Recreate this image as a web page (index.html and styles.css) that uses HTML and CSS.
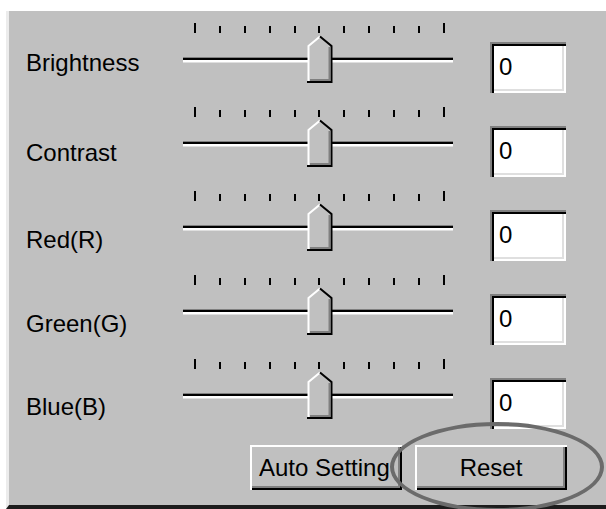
FILE: index.html
```html
<!DOCTYPE html>
<html lang="en">
<head>
  <meta charset="UTF-8">
  <title>Color Adjustment</title>
  <link rel="stylesheet" href="styles.css">
</head>
<body>

<div class="frame">
  <div class="panel">

    <div class="row">
      <span class="label">Brightness</span>
      <div class="slider">
        <div class="ticks"><i class="big"></i><i></i><i></i><i></i><i></i><i></i><i></i><i></i><i></i><i></i><i class="big"></i></div>
        <div class="track"></div>
        <svg class="thumb" width="26" height="48" viewBox="0 0 26 48">
          <polygon points="1,11 13,1 25,11 25,47 1,47" fill="#c0c0c0"/>
          <polyline points="1.5,46 1.5,11 13,1.5" fill="none" stroke="#fff" stroke-width="2"/>
          <polyline points="13,1.5 24.5,11 24.5,47 0,47" fill="none" stroke="#000" stroke-width="2"/>
          <polyline points="22.5,12 22.5,45 3,45" fill="none" stroke="#808080" stroke-width="2"/>
        </svg>
      </div>
      <div class="field">0</div>
    </div>

    <div class="row">
      <span class="label">Contrast</span>
      <div class="slider">
        <div class="ticks"><i class="big"></i><i></i><i></i><i></i><i></i><i></i><i></i><i></i><i></i><i></i><i class="big"></i></div>
        <div class="track"></div>
        <svg class="thumb" width="26" height="48" viewBox="0 0 26 48">
          <polygon points="1,11 13,1 25,11 25,47 1,47" fill="#c0c0c0"/>
          <polyline points="1.5,46 1.5,11 13,1.5" fill="none" stroke="#fff" stroke-width="2"/>
          <polyline points="13,1.5 24.5,11 24.5,47 0,47" fill="none" stroke="#000" stroke-width="2"/>
          <polyline points="22.5,12 22.5,45 3,45" fill="none" stroke="#808080" stroke-width="2"/>
        </svg>
      </div>
      <div class="field">0</div>
    </div>

    <div class="row">
      <span class="label">Red(R)</span>
      <div class="slider">
        <div class="ticks"><i class="big"></i><i></i><i></i><i></i><i></i><i></i><i></i><i></i><i></i><i></i><i class="big"></i></div>
        <div class="track"></div>
        <svg class="thumb" width="26" height="48" viewBox="0 0 26 48">
          <polygon points="1,11 13,1 25,11 25,47 1,47" fill="#c0c0c0"/>
          <polyline points="1.5,46 1.5,11 13,1.5" fill="none" stroke="#fff" stroke-width="2"/>
          <polyline points="13,1.5 24.5,11 24.5,47 0,47" fill="none" stroke="#000" stroke-width="2"/>
          <polyline points="22.5,12 22.5,45 3,45" fill="none" stroke="#808080" stroke-width="2"/>
        </svg>
      </div>
      <div class="field">0</div>
    </div>

    <div class="row">
      <span class="label">Green(G)</span>
      <div class="slider">
        <div class="ticks"><i class="big"></i><i></i><i></i><i></i><i></i><i></i><i></i><i></i><i></i><i></i><i class="big"></i></div>
        <div class="track"></div>
        <svg class="thumb" width="26" height="48" viewBox="0 0 26 48">
          <polygon points="1,11 13,1 25,11 25,47 1,47" fill="#c0c0c0"/>
          <polyline points="1.5,46 1.5,11 13,1.5" fill="none" stroke="#fff" stroke-width="2"/>
          <polyline points="13,1.5 24.5,11 24.5,47 0,47" fill="none" stroke="#000" stroke-width="2"/>
          <polyline points="22.5,12 22.5,45 3,45" fill="none" stroke="#808080" stroke-width="2"/>
        </svg>
      </div>
      <div class="field">0</div>
    </div>

    <div class="row">
      <span class="label">Blue(B)</span>
      <div class="slider">
        <div class="ticks"><i class="big"></i><i></i><i></i><i></i><i></i><i></i><i></i><i></i><i></i><i></i><i class="big"></i></div>
        <div class="track"></div>
        <svg class="thumb" width="26" height="48" viewBox="0 0 26 48">
          <polygon points="1,11 13,1 25,11 25,47 1,47" fill="#c0c0c0"/>
          <polyline points="1.5,46 1.5,11 13,1.5" fill="none" stroke="#fff" stroke-width="2"/>
          <polyline points="13,1.5 24.5,11 24.5,47 0,47" fill="none" stroke="#000" stroke-width="2"/>
          <polyline points="22.5,12 22.5,45 3,45" fill="none" stroke="#808080" stroke-width="2"/>
        </svg>
      </div>
      <div class="field">0</div>
    </div>

    <div class="buttons">
      <button class="btn btn-auto">Auto Setting</button>
      <button class="btn">Reset</button>
    </div>

    <div class="ring"></div>
  </div>
</div>

</body>
</html>
```

FILE: styles.css
```css
body {
  margin: 0;
  background: #fff;
  font-family: "Liberation Sans", Arial, sans-serif;
  overflow: hidden;
}
.frame {
  padding: 11px 0 0 6px;
}
.panel {
  position: relative;
  height: 498px;
  box-sizing: border-box;
  background: #c0c0c0;
  border-left: 3px solid #ececec;
  border-bottom: 4px solid #1c1c1c;
  padding-top: 5px;
}
.row {
  display: grid;
  grid-template-columns: 174px 307px 76px;
  height: 84px;
}
.label {
  font-size: 24px;
  line-height: 30px;
  color: #000;
  padding-left: 17px;
  margin-top: 32px;
  align-self: start;
}
.row:nth-child(2) .label { margin-top: 38px; }
.row:nth-child(3) .label { margin-top: 41px; }
.row:nth-child(4) .label { margin-top: 41px; }
.row:nth-child(5) .label { margin-top: 40px; }

.slider {
  position: relative;
  width: 270px;
  height: 84px;
}
.ticks {
  display: flex;
  justify-content: space-between;
  align-items: flex-end;
  width: 251px;
  margin: 7px 0 0 11px;
  height: 10px;
}
.ticks i {
  display: block;
  width: 2px;
  height: 7px;
  background: #000;
}
.ticks i.big {
  height: 10px;
}
.track {
  margin-top: 24px;
  height: 6px;
  background: linear-gradient(#808080 0 1px, #000 1px 3px, #fff 3px 5px, #dfdfdf 5px 6px);
}
.thumb {
  position: absolute;
  left: 124px;
  top: 19px;
}
.field {
  margin-top: 26px;
  height: 51px;
  background: #fff;
  box-shadow: inset 2px 2px 0 #808080, inset 4px 4px 0 #000, inset -2px -2px 0 #fff, inset -4px -4px 0 #dfdfdf;
  font-size: 24px;
  line-height: 24px;
  padding: 13px 0 0 9px;
  box-sizing: border-box;
}
.buttons {
  display: flex;
  gap: 13px;
  margin: 9px 0 0 241px;
}
.btn {
  width: 152px;
  height: 45px;
  padding: 0;
  border: none;
  background: #c0c0c0;
  box-shadow: inset 2px 2px 0 #fff, inset -2px -2px 0 #000, inset -4px -4px 0 #808080;
  font-family: "Liberation Sans", Arial, sans-serif;
  font-size: 24px;
  color: #000;
}
.btn-auto {
  text-align: left;
  padding-left: 9px;
  white-space: nowrap;
  overflow: hidden;
}
.ring {
  position: absolute;
  left: 381px;
  top: 411px;
  width: 206px;
  height: 82px;
  border: 4px solid #6b6b6b;
  border-radius: 50%;
}
```
